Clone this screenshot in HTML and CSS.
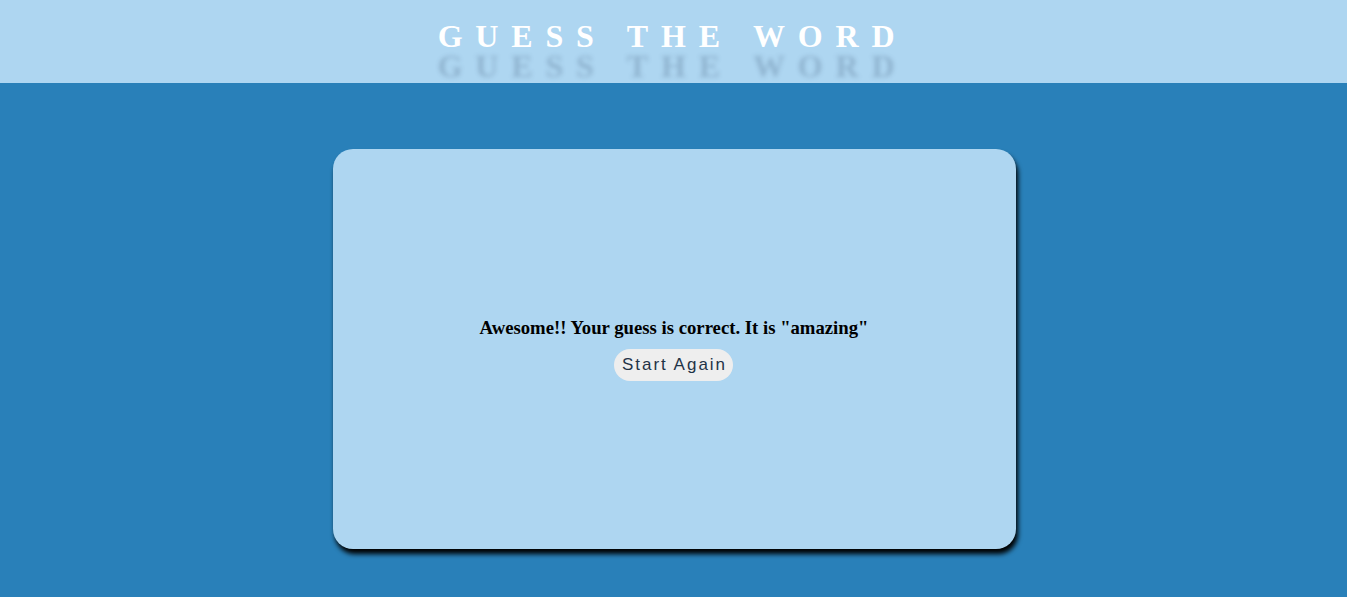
FILE: index.html
```html
<!DOCTYPE html>
<html lang="en">
<head>
<meta charset="utf-8">
<title>Guess The Word</title>
<link rel="stylesheet" href="styles.css">
</head>
<body>
  <header class="topbar">
    <h1 class="title">GUESS THE WORD</h1>
  </header>
  <main class="stage">
    <section class="card">
      <h3 class="message">Awesome!! Your guess is correct. It is "amazing"</h3>
      <button class="restart">Start Again</button>
    </section>
  </main>
</body>
</html>
```
FILE: styles.css
```css
html, body {
  margin: 0;
  padding: 0;
}
body {
  background: #2980b9;
  min-height: 597px;
  font-family: "Liberation Serif", "Times New Roman", serif;
}
.topbar {
  background: #aed6f1;
  height: 83px;
  box-sizing: border-box;
  padding-top: 18px;
  display: flex;
  justify-content: center;
}
.title {
  margin: 0 0 0 -2px;
  font-family: "Liberation Serif", "Times New Roman", serif;
  font-weight: bold;
  font-size: 32px;
  line-height: 37px;
  letter-spacing: 12.8px;
  color: #ffffff;
  text-shadow: 0 30px 4px rgba(60, 90, 120, 0.26);
}
.stage {
  display: flex;
  justify-content: center;
  padding-top: 66px;
  padding-left: 2px;
}
.card {
  width: 683px;
  height: 400px;
  background: #aed6f1;
  border-radius: 20px;
  box-shadow: 2px 5px 5px #000;
  display: flex;
  flex-direction: column;
  align-items: center;
  justify-content: center;
  gap: 10px;
}
.message {
  margin: 0 0 0 -1px;
  font-size: 18.72px;
  line-height: 22px;
  font-weight: bold;
  color: #000;
}
.restart {
  font-family: "Liberation Sans", Arial, sans-serif;
  font-size: 17px;
  letter-spacing: 2px;
  color: #1f3347;
  background: #eeeeee;
  border: none;
  border-radius: 16px;
  height: 32px;
  padding: 0 6px 0 8px;
  margin-left: -2px;
  cursor: pointer;
}
```
